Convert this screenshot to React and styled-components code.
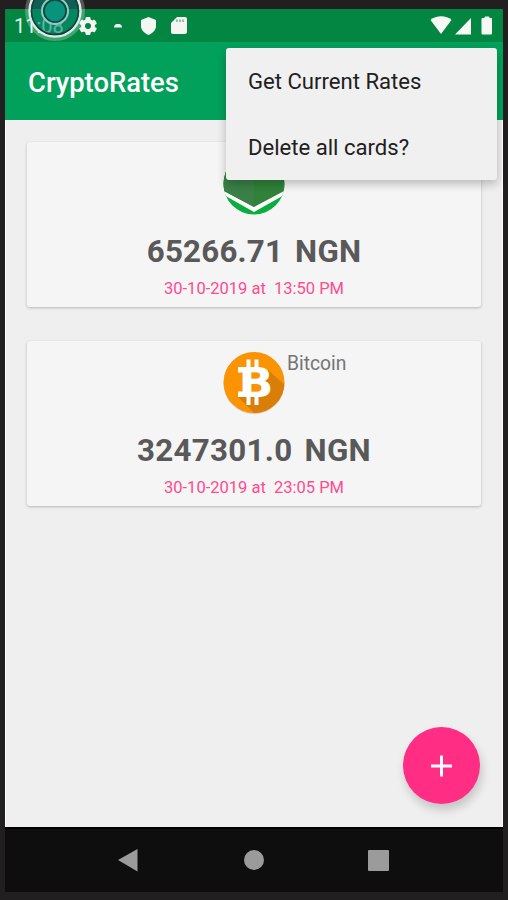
import React from "react";
import styled, { createGlobalStyle } from "styled-components";

const GlobalStyle = createGlobalStyle`
  * {
    box-sizing: border-box;
  }
  body {
    margin: 0;
    background: #211f20;
    font-family: Roboto, "Liberation Sans", sans-serif;
  }
  svg {
    display: block;
  }
`;
const StyledDevice = styled.div`
  position: relative;
  height: 900px;
  padding: 9px 5px 8px;
  overflow: hidden;
  background: #211f20;
`;
const StyledScreen = styled.div`
  display: flex;
  flex-direction: column;
  width: 498px;
  height: 883px;
  background: #efefef;
`;
const StyledStatusBar = styled.header`
  display: flex;
  flex: 0 0 33px;
  align-items: center;
  justify-content: space-between;
  padding: 0 8px 0 9px;
  background: #028642;
`;
const StyledClock = styled.span`
  width: 59px;
  padding-top: 2px;
  color: #e3f5ec;
  font-size: 20px;
  line-height: 31px;
`;
const StyledStatusGroup = styled.div`
  display: flex;
  align-items: center;
`;
const StyledAppBar = styled.div`
  display: flex;
  flex: 0 0 78px;
  align-items: center;
  padding: 3px 23px 0;
  background: #02a15b;
`;
const StyledTitle = styled.h1`
  margin: 0;
  color: #fff;
  font-size: 27.4px;
  font-weight: 500;
  line-height: 32px;
`;
const StyledContent = styled.main`
  display: flex;
  flex: 1;
  flex-direction: column;
  gap: 34px;
  padding: 22px 21px 0;
  border-right: 1px solid #fff;
  border-left: 1px solid #fff;
`;
const StyledCard = styled.article`
  display: flex;
  flex-direction: column;
  align-items: center;
  width: 454px;
  height: 165px;
  padding-top: 10px;
  border-radius: 3px;
  background: #f5f5f5;
  box-shadow: 0 1px 3px rgba(0, 0, 0, 0.24);
`;
const StyledCoin = styled.div`
  display: grid;
  grid-template-columns: 195px 64px 1fr;
  width: 100%;
  height: 64px;
`;
const StyledCoinName = styled.span`
  grid-column: 3;
  padding-left: 1px;
  color: #747474;
  font-size: 19.3px;
  line-height: 25px;
`;
const StyledCoinIcon = styled.svg`
  grid-column: 2;
`;
const StyledRate = styled.p`
  margin: 16px 0 0;
  color: #595959;
  font-size: 31.3px;
  font-weight: 700;
  letter-spacing: ${(props) => props.$spacing};
  line-height: 40px;
  word-spacing: 4px;
`;
const StyledDate = styled.p`
  margin: 6px 0 0;
  color: #ff4b91;
  font-size: 16.5px;
  line-height: 22px;
  white-space: pre;
`;
const StyledNav = styled.nav`
  flex: 0 0 65px;
  border-top: 2px solid #000;
  background: #0e0e0e;
`;
const StyledMenu = styled.div`
  position: absolute;
  top: 48px;
  left: 226px;
  width: 271px;
  height: 132px;
  border-radius: 3px;
  background: #f0f0f0;
  box-shadow: 0 4px 10px rgba(0, 0, 0, 0.24);
`;
const StyledMenuItem = styled.button`
  display: block;
  width: 100%;
  height: 66px;
  padding: 0 22px;
  border: 0;
  background: none;
  color: #202020;
  font: 400 22.1px / 28px Roboto, "Liberation Sans", sans-serif;
  text-align: left;
`;
const StyledFab = styled.button`
  position: absolute;
  top: 727px;
  left: 403px;
  width: 77px;
  height: 77px;
  padding: 0;
  border: 0;
  border-radius: 50%;
  background: #ff2d83;
  box-shadow: 2px 6px 10px rgba(0, 0, 0, 0.18);
`;
const StyledTouch = styled.svg`
  position: absolute;
  top: -21px;
  left: 23px;
`;

const StatusIcons = () => (
  <svg width='114' height='33' viewBox='0 0 114 33' fill='#f4f7f1'>
    <g transform='translate(15 17)'>
      {[0, 60, 120].map((angle) => (
        <rect key={angle} x='-2.5' y='-9' width='5' height='18' rx='1' transform={`rotate(${angle})`} />
      ))}
      <circle r='5' fill='none' stroke='#f4f7f1' strokeWidth='4' />
      <circle r='3' fill='#028642' />
    </g>
    <path d='M41 18.5c0-2 1.500-3.500 3-3.500h2c1.500 0 3 1.500 3 3.500z' />
    <path d='M75.500 8l7.500 3v6c0 4-3 7-7.500 9-4.500-2-7.500-5-7.500-9v-6z' />
    <path d='M104 8h8q2 0 2 2v13q0 2-2 2h-12q-2 0-2-2v-9z' />
    <path d='M104 10.500v2.500m3-2.500v2.500m3-2.500v2.500' stroke='#4aa474' strokeWidth='1.200' />
  </svg>
);

const SignalIcons = () => (
  <svg width='66' height='33' viewBox='0 0 66 33' fill='#f7f9f5'>
    <path d='M1.500 11C7 6 17.500 6 22.500 11L12 25z' />
    <path d='M26 25.500L42 9v16.500z' />
    <path d='M53 9.500h3V8h4v1.500h2.500V25H53z' stroke='#f7f9f5' strokeLinejoin='round' />
  </svg>
);

const NgnCoin = () => (
  <StyledCoinIcon width='64' height='64' viewBox='0 0 64 64'>
    <defs>
      <clipPath id='coin'>
        <circle cx='32' cy='32' r='30.500' />
      </clipPath>
    </defs>
    <g clipPath='url(#coin)'>
      <rect width='64' height='64' fill='#0cad3f' />
      <path d='M0 0h64v42L32 60 0 42z' fill='#fff' />
      <path d='M0 0h64v38L32 55 0 38z' fill='#30823a' />
      <path d='M0 0h32v55L0 38z' fill='#398047' />
    </g>
  </StyledCoinIcon>
);

const BitcoinCoin = () => (
  <StyledCoinIcon width='64' height='64' viewBox='0 0 64 64'>
    <defs>
      <clipPath id='bitcoin'>
        <circle cx='32' cy='31.500' r='30.500' />
      </clipPath>
    </defs>
    <circle cx='32' cy='32.500' r='30.500' fill='#d4cdc2' />
    <g clipPath='url(#bitcoin)'>
      <rect width='64' height='64' fill='#fa9404' />
      <path d='M46 19l18 16v29H34L16 46h25z' fill='#d97e08' />
    </g>
    <path d='M26.500 8.500v9m8-9v9M26.500 45v9m8-9v9' stroke='#fff' strokeWidth='4' />
    <path d='M16 18.700h10M16 43.300h10' stroke='#fff' strokeWidth='5.400' />
    <text
      transform='translate(16.500 46) scale(1.12 1)'
      fill='#fff'
      fontFamily='DejaVu Sans, sans-serif'
      fontSize='41'
      fontWeight='700'
    >
      B
    </text>
  </StyledCoinIcon>
);

const RateCard = ({ icon, name, rate, date, spacing }) => (
  <StyledCard>
    <StyledCoin>
      {icon}
      <StyledCoinName>{name}</StyledCoinName>
    </StyledCoin>
    <StyledRate $spacing={spacing}>{rate}</StyledRate>
    <StyledDate>{date}</StyledDate>
  </StyledCard>
);

export default function App() {
  return (
    <StyledDevice>
      <GlobalStyle />
      <StyledScreen>
        <StyledStatusBar>
          <StyledStatusGroup>
            <StyledClock>11:08</StyledClock>
            <StatusIcons />
          </StyledStatusGroup>
          <SignalIcons />
        </StyledStatusBar>
        <StyledAppBar>
          <StyledTitle>CryptoRates</StyledTitle>
        </StyledAppBar>
        <StyledContent>
          <RateCard icon={<NgnCoin />} rate='65266.71 NGN' date='30-10-2019 at  13:50 PM' spacing='0.2px' />
          <RateCard
            icon={<BitcoinCoin />}
            name='Bitcoin'
            rate='3247301.0 NGN'
            date='30-10-2019 at  23:05 PM'
            spacing='0.3px'
          />
        </StyledContent>
        <StyledNav>
          <svg width='498' height='63' viewBox='0 0 498 63' fill='#9b9b9b'>
            <path d='M113 31L132.500 20v22.500z' />
            <circle cx='249' cy='31' r='10' />
            <rect x='363' y='21' width='21' height='21' rx='1' />
          </svg>
        </StyledNav>
      </StyledScreen>
      <StyledMenu>
        <StyledMenuItem>Get Current Rates</StyledMenuItem>
        <StyledMenuItem>Delete all cards?</StyledMenuItem>
      </StyledMenu>
      <StyledFab aria-label='Add card'>
        <svg width='77' height='77' viewBox='0 0 77 77' stroke='#fff' strokeWidth='3'>
          <path d='M28 39h21M38.500 28.500v21' />
        </svg>
      </StyledFab>
      <StyledTouch width='64' height='64' viewBox='0 0 64 64'>
        <circle cx='32' cy='32' r='27' fill='none' stroke='#fff' strokeOpacity='0.25' strokeWidth='6' />
        <circle cx='32' cy='32' r='25.500' fill='#078776' fillOpacity='0.6' stroke='#d9ebe5' strokeWidth='2.500' />
        <circle cx='32' cy='32' r='23.500' fill='none' stroke='#173d3c' strokeWidth='1.500' />
        <circle cx='32' cy='32' r='13' fill='none' stroke='#91c9c0' strokeWidth='2' />
        <circle cx='32' cy='32' r='11' fill='#08937d' stroke='#10443f' strokeWidth='1.500' />
      </StyledTouch>
    </StyledDevice>
  );
}
